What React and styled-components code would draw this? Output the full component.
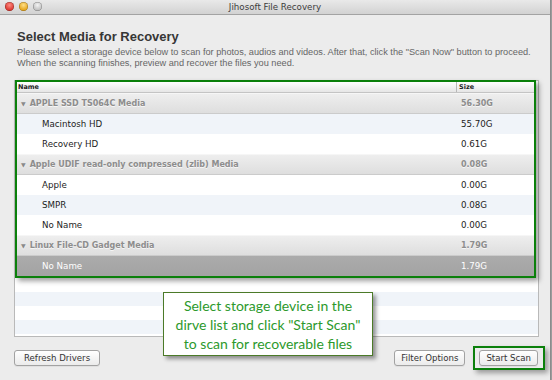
import React from 'react'
import styled, { createGlobalStyle } from 'styled-components'

const GlobalStyle = createGlobalStyle`
	html, body {
		margin: 0;
		padding: 0;
		background: #9c9c9c;
	}
	body {
		font-family: 'Liberation Sans', Arial, sans-serif;
	}
`

const Window = styled.div`
	position: relative;
	width: 550px;
	height: 380px;
	background: #ececec;
	border-right: 1px solid #8c8c8c;
	overflow: hidden;
`

const TitleBar = styled.div`
	height: 14px;
	display: grid;
	grid-template-columns: 60px 1fr 60px;
	align-items: center;
	padding: 0 5px;
	background: linear-gradient(#e9e9e9, #d2d2d2);
	border-bottom: 1px solid #a3a3a3;
`

const Lights = styled.div`
	display: flex;
	gap: 5px;
	margin-top: -2px;
`

const Light = styled.span`
	width: 9px;
	height: 9px;
	border-radius: 50%;
	background: ${p => p.$bg};
	box-shadow: inset 0 0 0 0.5px rgba(0, 0, 0, 0.35);
`

const Title = styled.div`
	text-align: center;
	font-family: 'DejaVu Sans', sans-serif;
	font-size: 8.7px;
	color: #3c3c3c;
	margin-top: -1px;
`

const Content = styled.div`
	padding: 0 5px 0 14px;
`

const Heading = styled.h1`
	margin: 14px 0 0 3px;
	font-size: 13px;
	line-height: 15px;
	font-weight: bold;
	color: #363636;
`

const Intro = styled.p`
	margin: 3px 0 0 3px;
	font-size: 9.2px;
	line-height: 11px;
	color: #666666;
	white-space: nowrap;
`

const List = styled.div`
	margin-top: 11px;
	width: 523px;
	height: 255px;
	background: #ffffff;
	border: 1px solid #b9b9b9;
	display: flex;
	flex-direction: column;
`

const Highlight = styled.div`
	position: relative;
	z-index: 1;
	margin-top: -1px;
	width: 517px;
	border: 2px solid #0b800b;
	background: #ffffff;
	box-shadow: 3px 3px 5px rgba(0, 0, 0, 0.38);
	font-family: 'DejaVu Sans', sans-serif;
`

const Row = styled.div`
	display: grid;
	grid-template-columns: 439px 1fr;
	align-items: center;
	height: ${p => p.$h}px;
	box-sizing: border-box;
`

const HeaderRow = styled(Row)`
	background: linear-gradient(#ffffff, #e6e6e6);
	border-bottom: 1px solid #c4c4c4;
	font-size: 6.5px;
	font-weight: bold;
	color: #222;
`

const HeadCell = styled.div`
	padding-left: ${p => p.$pad}px;
	border-left: ${p => (p.$divider ? '1px solid #b8b8b8' : 'none')};
	line-height: 10px;
`

const GroupRow = styled(Row)`
	background: linear-gradient(#eeeeee, #dedede);
	border-bottom: 1px solid #cbcbcb;
	border-top: 1px solid #f6f6f6;
	font-size: 8px;
	font-weight: bold;
	color: #8d8d8d;
	text-shadow: 0 1px 0 rgba(255, 255, 255, 0.7);
`

const ItemRow = styled(Row)`
	background: ${p => (p.$selected ? 'linear-gradient(#ababab, #a3a3a3)' : p.$alt ? '#f0f4f9' : '#ffffff')};
	font-size: 8.7px;
	color: ${p => (p.$selected ? '#ffffff' : '#1c1c1c')};
`

const NameCell = styled.div`
	display: flex;
	align-items: center;
	gap: 4px;
	padding-left: ${p => p.$pad}px;
	white-space: nowrap;
`

const SizeCell = styled.div`
	padding-left: 5px;
`

const Arrow = styled.span`
	font-size: 6px;
	color: #8a8a8a;
`

const Filler = styled.div`
	flex: 1;
	overflow: hidden;
`

const EmptyRow = styled.div`
	height: 14px;
	background: ${p => (p.$alt ? '#f0f4f9' : '#ffffff')};
`

const Footer = styled.div`
	margin-top: 9px;
	display: flex;
	align-items: center;
	justify-content: space-between;
`

const RightButtons = styled.div`
	display: flex;
	align-items: center;
	gap: 8px;
`

const Button = styled.button`
	height: 16px;
	padding: 0 ${p => p.$pad}px;
	border: 1px solid #a2a2a2;
	border-radius: 3px;
	background: linear-gradient(#ffffff, #ebebeb);
	font-family: 'DejaVu Sans', sans-serif;
	font-size: 8.6px;
	color: #333;
	line-height: 14px;
	box-shadow: 0 1px 0 rgba(0, 0, 0, 0.05);
`

const ScanFrame = styled.div`
	display: flex;
	padding: 2px 5px 2px 4px;
	border: 2px solid #0b800b;
	box-shadow: 3px 3px 5px rgba(0, 0, 0, 0.35);
`

const Callout = styled.div`
	position: absolute;
	left: 163px;
	top: 292px;
	width: 208px;
	height: 62px;
	display: flex;
	flex-direction: column;
	justify-content: center;
	background: #ffffff;
	border: 1px solid #4b7a28;
	box-shadow: 3px 3px 4px rgba(0, 0, 0, 0.4);
	font-family: Lato, 'Open Sans', sans-serif;
	font-size: 14px;
	line-height: 19px;
	color: #2c992c;
	text-align: center;
`

const media = [
	{
		name: 'APPLE SSD TS064C Media',
		size: '56.30G',
		items: [
			{ name: 'Macintosh HD', size: '55.70G', alt: true },
			{ name: 'Recovery HD', size: '0.61G' }
		]
	},
	{
		name: 'Apple UDIF read-only compressed (zlib) Media',
		size: '0.08G',
		items: [
			{ name: 'Apple', size: '0.00G' },
			{ name: 'SMPR', size: '0.08G', alt: true },
			{ name: 'No Name', size: '0.00G' }
		]
	},
	{
		name: 'Linux File-CD Gadget Media',
		size: '1.79G',
		items: [{ name: 'No Name', size: '1.79G', selected: true }]
	}
]

export default function App() {
	return (
		<Window>
			<GlobalStyle />
			<TitleBar>
				<Lights>
					<Light $bg="radial-gradient(circle at 50% 35%, #ff8a80, #d8332b 70%)" />
					<Light $bg="radial-gradient(circle at 50% 35%, #ffe08a, #e4a114 70%)" />
					<Light $bg="radial-gradient(circle at 50% 35%, #f4f4f4, #bcbcbc 70%)" />
				</Lights>
				<Title>Jihosoft File Recovery</Title>
				<span />
			</TitleBar>
			<Content>
				<Heading>Select Media for Recovery</Heading>
				<Intro>
					Please select a storage device below to scan for photos, audios and videos. After that, click the "Scan Now" button to proceed.
					<br />
					When the scanning finishes, preview and recover the files you need.
				</Intro>
				<List>
					<Highlight>
						<HeaderRow $h={11}>
							<HeadCell $pad={1}>Name</HeadCell>
							<HeadCell $pad={2} $divider>Size</HeadCell>
						</HeaderRow>
						{media.map(group => (
							<React.Fragment key={group.name}>
								<GroupRow $h={21}>
									<NameCell $pad={4}>
										<Arrow>▼</Arrow>
										{group.name}
									</NameCell>
									<SizeCell>{group.size}</SizeCell>
								</GroupRow>
								{group.items.map((item, i) => (
									<ItemRow key={i} $h={20} $alt={item.alt} $selected={item.selected}>
										<NameCell $pad={25}>{item.name}</NameCell>
										<SizeCell>{item.size}</SizeCell>
									</ItemRow>
								))}
							</React.Fragment>
						))}
					</Highlight>
					<Filler>
						{[0, 1, 2, 3, 4].map(i => (
							<EmptyRow key={i} $alt={i % 2 === 1} />
						))}
					</Filler>
				</List>
				<Footer>
					<Button $pad={9}>Refresh Drivers</Button>
					<RightButtons>
						<Button $pad={6}>Filter Options</Button>
						<ScanFrame>
							<Button $pad={6}>Start Scan</Button>
						</ScanFrame>
					</RightButtons>
				</Footer>
			</Content>
			<Callout>
				<div>Select storage device in the</div>
				<div>dirve list and click "Start Scan"</div>
				<div>to scan for recoverable files</div>
			</Callout>
		</Window>
	)
}
